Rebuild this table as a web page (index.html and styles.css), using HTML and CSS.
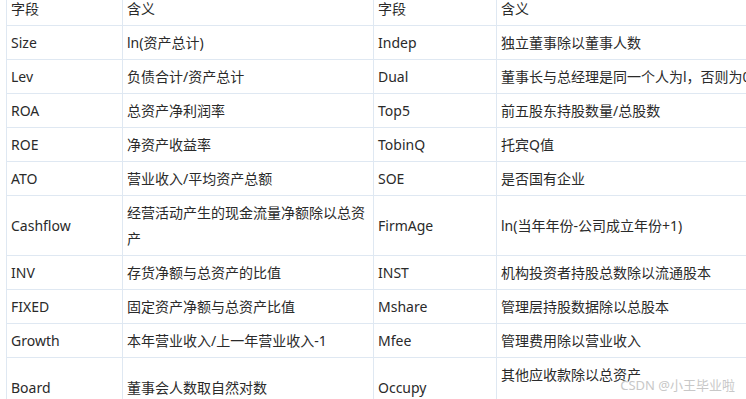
FILE: index.html
```html
<!DOCTYPE html>
<html lang="zh-CN">
<head>
<meta charset="utf-8">
<link rel="stylesheet" href="styles.css">
</head>
<body>
<div class="page">
<table class="vars">
  <colgroup>
    <col class="c1"><col class="c2"><col class="c3"><col class="c4">
  </colgroup>
  <tr><td>字段</td><td>含义</td><td>字段</td><td>含义</td></tr>
  <tr><td>Size</td><td>ln(资产总计)</td><td>Indep</td><td>独立董事除以董事人数</td></tr>
  <tr><td>Lev</td><td>负债合计/资产总计</td><td>Dual</td><td class="nowrap">董事长与总经理是同一个人为l，否则为0</td></tr>
  <tr><td>ROA</td><td>总资产净利润率</td><td>Top5</td><td>前五股东持股数量/总股数</td></tr>
  <tr><td>ROE</td><td>净资产收益率</td><td>TobinQ</td><td>托宾Q值</td></tr>
  <tr><td>ATO</td><td>营业收入/平均资产总额</td><td>SOE</td><td>是否国有企业</td></tr>
  <tr><td>Cashflow</td><td>经营活动产生的现金流量净额除以总资产</td><td>FirmAge</td><td>ln(当年年份-公司成立年份+1)</td></tr>
  <tr><td>INV</td><td>存货净额与总资产的比值</td><td>INST</td><td>机构投资者持股总数除以流通股本</td></tr>
  <tr><td>FIXED</td><td>固定资产净额与总资产比值</td><td>Mshare</td><td>管理层持股数据除以总股本</td></tr>
  <tr><td>Growth</td><td>本年营业收入/上一年营业收入-1</td><td>Mfee</td><td>管理费用除以营业收入</td></tr>
  <tr class="tall"><td>Board</td><td>董事会人数取自然对数</td><td>Occupy</td><td class="top">其他应收款除以总资产</td></tr>
</table>
<div class="mark">CSDN @小王毕业啦</div>
</div>
</body>
</html>
```

FILE: styles.css
```css
html, body {
  margin: 0;
  padding: 0;
  background: #fff;
  overflow: hidden;
}
.page {
  position: relative;
  width: 746px;
  height: 399px;
  overflow: hidden;
}
.vars {
  border-collapse: collapse;
  table-layout: fixed;
  width: 840px;
  margin: -9px 0 0 6px;
  font-family: "Noto Sans", "Noto Sans CJK SC", sans-serif;
  font-size: 14px;
  color: #2a2a2a;
}
.c1 { width: 116px; }
.c2 { width: 251px; }
.c3 { width: 123px; }
.c4 { width: 350px; }
.vars td {
  border: 1px solid #dfe8f2;
  padding: 4px 4px 3px 4px;
  line-height: 26px;
  vertical-align: middle;
  text-align: left;
}
.vars td.nowrap { white-space: nowrap; }
.vars .tall td { height: 52px; }
.vars .tall td.top { vertical-align: top; }
.mark {
  position: absolute;
  right: 11px;
  bottom: 5px;
  font-family: "Noto Sans", "Noto Sans CJK SC", sans-serif;
  font-size: 13px;
  color: #c8c8c8;
  text-shadow: 0 0 2px #fff;
}
```
